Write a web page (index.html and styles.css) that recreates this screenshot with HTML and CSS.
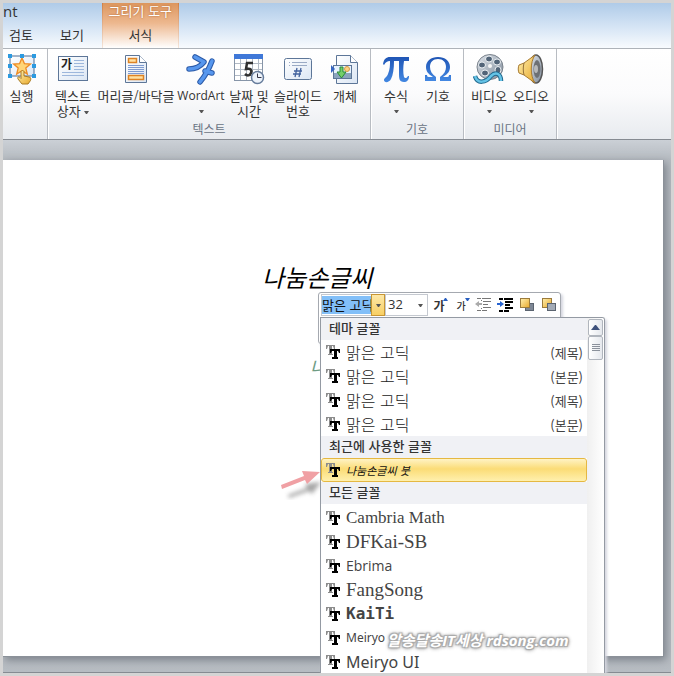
FILE: index.html
```html
<!DOCTYPE html>
<html lang="ko">
<head>
<meta charset="utf-8">
<title>그리기 도구</title>
<link rel="stylesheet" href="styles.css">
</head>
<body>
<svg class="defs" aria-hidden="true">
  <defs>
    <linearGradient id="blue" x1="0" y1="0" x2="0" y2="1"><stop offset="0" stop-color="#1f55b5"/><stop offset="1" stop-color="#4388e2"/></linearGradient>
    <linearGradient id="gold" x1="0" y1="0" x2="1" y2="1"><stop offset="0" stop-color="#fff0b0"/><stop offset="1" stop-color="#e8a92c"/></linearGradient>
    <linearGradient id="steel" x1="0" y1="0" x2="1" y2="1"><stop offset="0" stop-color="#dde3ea"/><stop offset="1" stop-color="#7f8b99"/></linearGradient>
    <linearGradient id="sheet" x1="0" y1="0" x2="1" y2="1"><stop offset="0" stop-color="#ffffff"/><stop offset="1" stop-color="#dbe6f4"/></linearGradient>
    <symbol id="tt" viewBox="0 0 14 14">
      <path d="M0 0h9v4H8L7 1H6v8h1v1H2V9h1V1H2L1 4H0z" fill="#8c8c8c"/>
      <path d="M4 4h10v4h-1l-1-2h-1v6h1v2H6v-2h2V6H6L5 8H4z" fill="#000"/>
    </symbol>
    <symbol id="down" viewBox="0 0 5 3"><path d="M0 0h5L3 3H2z" fill="currentColor"/></symbol>
  </defs>
</svg>
<div class="window">
  <header class="tabs">
    <span class="app-title">nt</span>
    <nav class="tab-row">
      <a class="tab" href="#review">검토</a>
      <a class="tab" href="#view">보기</a>
      <div class="context">
        <span class="context-name">그리기 도구</span>
        <a class="tab" href="#format">서식</a>
      </div>
    </nav>
  </header>

  <section class="ribbon">
    <div class="group group-action">
      <div class="tools">
        <button class="tool">
          <svg width="32" height="32" viewBox="0 0 32 32"><rect x="4" y="3" width="24" height="20" fill="url(#sheet)" stroke="#496b94"/><path d="M16 5l2.400 5.600 6 .5-4.600 3.900 1.500 6-5.300-3.300-5.300 3.300 1.500-6L7.600 11.100l6-.5z" fill="#ffd577" stroke="#ee8b25" stroke-width="1.300"/><g fill="#2c9ae0"><path d="M2 1h4v4H2zM14 1h4v4h-4zM26 1h4v4h-4zM2 11h4v4H2zM26 11h4v4h-4zM2 21h4v4H2zM26 21h4v4h-4z"/></g><path d="M15 19c0-2 3-2 3 0v4l5 1c2 0 2 2 1.500 3.500L22 31h-6l-4-5c-1-2 1-3 2-1.500l1 1z" fill="url(#gold)" stroke="#a87b25"/></svg>
          <span>실행</span>
        </button>
      </div>
    </div>
    <div class="group group-text">
      <div class="tools">
        <button class="tool w-box">
          <svg width="32" height="32" viewBox="0 0 32 32"><rect x="1.500" y="3.500" width="29" height="24" fill="url(#sheet)" stroke="#5d7698"/><path d="M17 7.500h10M17 10.500h10M17 13.500h10M17 16.500h10M5 19.500h22M5 22.500h22" stroke="#9db7dc"/><text class="glyph-small" x="4" y="16">가</text></svg>
          <span>텍스트<br>상자 <svg class="arrow" width="5" height="3"><use href="#down"/></svg></span>
        </button>
        <button class="tool w-header">
          <svg width="32" height="32" viewBox="0 0 32 32"><path d="M5.500 2.500h14l7 7v20h-21z" fill="url(#sheet)" stroke="#5d7698"/><path d="M19.500 2.500v7h7" fill="#fff" stroke="#5d7698"/><rect x="8.500" y="5.500" width="8" height="4" fill="#ffe0a0" stroke="#dd8325" stroke-width="1.500"/><rect x="8.500" y="22.500" width="15" height="4" fill="#ffe0a0" stroke="#dd8325" stroke-width="1.500"/><path d="M8 12.500h16M8 14.500h16M8 16.500h16M8 18.500h16M8 20.500h16" stroke="#7f9bd0"/></svg>
          <span>머리글/바닥글</span>
        </button>
        <button class="tool w-art">
          <svg width="32" height="32" viewBox="0 0 32 32"><g fill="none" stroke-linecap="round" stroke-linejoin="round"><path d="M10 4l9 5c-4 5-9 7-15 7M27 8c-3 8-7 15-12 21M20 18l7 2" stroke="#2d5ba8" stroke-width="5.500"/><path d="M10 4l9 5c-4 5-9 7-15 7M27 8c-3 8-7 15-12 21M20 18l7 2" stroke="#5797ee" stroke-width="3.500"/></g></svg>
          <span>WordArt</span>
          <svg class="arrow arrow-below" width="5" height="3"><use href="#down"/></svg>
        </button>
        <button class="tool w-date">
          <svg width="32" height="32" viewBox="0 0 32 32"><rect x="1.500" y="2.500" width="28" height="25" fill="#fff" stroke="#8795a8"/><path d="M1 1h29v5H1z" fill="#3f78d8"/><path d="M2 10.500h27M2 16.500h27M2 22.500h27M7.500 6v21M13.500 6v21M19.500 6v21M25.500 6v21" stroke="#b2bac5"/><path d="M20 10h-6l-1 6c5-1 6 1 5 4s-4 3-6 1" fill="none" stroke="#303030" stroke-width="2.500"/><circle cx="24.500" cy="24.500" r="6" fill="#edf3fb" stroke="#657b9a" stroke-width="1.500"/><path d="M24.500 20.500v4h4" fill="none" stroke="#334"/></svg>
          <span>날짜 및<br>시간</span>
        </button>
        <button class="tool w-number">
          <svg width="32" height="32" viewBox="0 0 32 32"><rect x="2.500" y="5.500" width="27" height="21" rx="2" fill="url(#sheet)" stroke="#5d7698"/><path d="M7 9.500h1M10 9.500h15M7 12.500h1M10 12.500h15" stroke="#9aaac5"/><path d="M15 15l-2 9M19 15l-2 9M12 18h8M11 21h8" stroke="#42629e" stroke-width="1.300"/></svg>
          <span>슬라이드<br>번호</span>
        </button>
        <button class="tool w-object">
          <svg width="32" height="32" viewBox="0 0 32 32"><path d="M7.500 2.500h14l7 7v21h-21z" fill="url(#sheet)" stroke="#5d7698"/><path d="M21.500 2.500v7h7" fill="#fff" stroke="#5d7698"/><rect x="4.500" y="12.500" width="18" height="13" fill="#e8f3ff" stroke="#5d7698"/><path d="M5 20h17v5H5z" fill="#8ba4bd"/><circle cx="18" cy="16" r="2.500" fill="#ffd181" stroke="#d49b47"/><path d="M11 14h3v5h3l-4.500 6L8 19h3z" fill="#74cf68" stroke="#28883b"/><path d="M2 12l4 4-4 4z" fill="#3766c2"/></svg>
          <span>개체</span>
        </button>
      </div>
      <h2>텍스트</h2>
    </div>
    <div class="group group-symbol">
      <div class="tools">
        <button class="tool w-media">
          <svg width="32" height="32" viewBox="0 0 32 32"><path d="M3 11C4 6 6 4 10 4h19v4h-5c-1 6-1 12 0 16 1 2 3 1 4-1h1c0 4-2 6-5 6-5 0-5-4-5-9V8h-5c0 8-1 14-3 18-2 4-7 4-7 1 0-2 3-3 4-6 2-5 2-9 2-13-3 0-4 1-6 4z" fill="url(#blue)"/></svg>
          <span>수식</span>
          <svg class="arrow arrow-below" width="5" height="3"><use href="#down"/></svg>
        </button>
        <button class="tool w-media">
          <svg width="32" height="32" viewBox="0 0 32 32"><path d="M3 28v-6h2c0 2 1 2 3 2h3C6 21 4 18 4 14 4 8 9 4 16 4s12 4 12 10c0 4-2 7-7 10h3c2 0 3 0 3-2h2v6H18v-4c4-3 6-6 6-10 0-5-3-8-8-8s-8 3-8 8c0 4 2 7 6 10v4z" fill="url(#blue)"/></svg>
          <span>기호</span>
        </button>
      </div>
      <h2>기호</h2>
    </div>
    <div class="group group-media">
      <div class="tools">
        <button class="tool w-media">
          <svg width="32" height="32" viewBox="0 0 32 32"><ellipse cx="17" cy="14" rx="13" ry="12.500" fill="url(#steel)" stroke="#7b838d"/><g fill="#526478" stroke="#eef2f5"><ellipse cx="16" cy="6" rx="3.500" ry="3"/><ellipse cx="24" cy="9" rx="3.500" ry="3"/><ellipse cx="25" cy="17" rx="3" ry="3.500"/><ellipse cx="9" cy="12" rx="3.500" ry="3"/><ellipse cx="12" cy="20" rx="3.500" ry="3"/></g><circle cx="17" cy="13" r="2" fill="#f7f7f7"/><path d="M2 23c2 8 11 7 16 0 5-5 10-2 10 5" fill="none" stroke="#21698f" stroke-width="4.500"/><path d="M2 23c2 8 11 7 16 0 5-5 10-2 10 5" fill="none" stroke="#65c3e6" stroke-width="2.500"/></svg>
          <span>비디오</span>
          <svg class="arrow arrow-below" width="5" height="3"><use href="#down"/></svg>
        </button>
        <button class="tool w-media">
          <svg width="32" height="32" viewBox="0 0 32 32"><ellipse cx="21" cy="16" rx="6.500" ry="14" fill="url(#steel)" stroke="#555" stroke-width="1.500"/><ellipse cx="22" cy="16" rx="3.500" ry="9" fill="#6d7074"/><path d="M4 12l5-2L20 2c-5 7-5 21 0 28L9 22l-5-2c-1-2-1-6 0-8z" fill="url(#gold)" stroke="#a87b32"/><path d="M9 10c-1 4-1 8 0 12" fill="none" stroke="#93703a"/><ellipse cx="21" cy="16" rx="2" ry="4" fill="#b8b9ba"/></svg>
          <span>오디오</span>
          <svg class="arrow arrow-below" width="5" height="3"><use href="#down"/></svg>
        </button>
      </div>
      <h2>미디어</h2>
    </div>
  </section>

  <main class="workspace">
    <article class="slide">
      <h1>나눔손글씨</h1>
      <p class="subtitle">나</p>
      <svg class="pointer" width="44" height="34" viewBox="0 0 44 34"><path d="M7 29l19-7-2-4 16-2-9 12-3-3-20 7z" fill="#777" opacity=".65" filter="blur(2px)"/><path d="M0 19l23-9-2-5 18 1-13 12-2-4-23 9z" fill="#f0a0a4"/></svg>
    </article>
    <div class="mini">
      <div class="mini-row">
        <div class="combo combo-font"><input aria-label="글꼴" value="맑은 고딕"><button class="drop hot" aria-label="글꼴 목록"><svg width="5" height="3"><use href="#down"/></svg></button></div>
        <div class="combo combo-size"><input aria-label="글꼴 크기" value="32"><button class="drop" aria-label="크기 목록"><svg width="5" height="3"><use href="#down"/></svg></button></div>
        <button class="mini-tool big" aria-label="글꼴 크기 크게">가<svg class="mark" width="5" height="3" viewBox="0 0 5 3"><path d="M0 3h5L3 0H2z" fill="#285ec0"/></svg></button>
        <button class="mini-tool small" aria-label="글꼴 크기 작게">가<svg class="mark" width="5" height="3" viewBox="0 0 5 3"><path d="M0 0h5L3 3H2z" fill="#285ec0"/></svg></button>
        <button class="mini-tool" aria-label="목록 수준 줄임"><svg width="16" height="16" viewBox="0 0 16 16"><path d="M2 1.500h4M7 1.500h9M8 4.500h8M8 7.500h5M8 10.500h8M2 13.500h4M7 13.500h5M6 3.500h1M6 11.500h1" stroke="#777"/><path d="M0 7l4-3v2h3v2H4v2z" fill="#aaa"/></svg></button>
        <button class="mini-tool" aria-label="목록 수준 늘림"><svg width="16" height="16" viewBox="0 0 16 16"><path d="M2 2h4M7 2h9M8 5h8M8 8h5M8 11h8M2 14h4M7 14h5" stroke="#000" stroke-width="2"/><path d="M7 7L3 4v2H0v2h3v2z" fill="#2764d2"/></svg></button>
        <button class="mini-tool" aria-label="앞으로 가져오기"><svg width="16" height="16" viewBox="0 0 16 16"><rect x="6.500" y="6.500" width="8" height="7" fill="#7e8795" stroke="#5b6470"/><rect x="1.500" y="1.500" width="9" height="9" fill="url(#gold)" stroke="#9b7b3c"/></svg></button>
        <button class="mini-tool" aria-label="뒤로 보내기"><svg width="16" height="16" viewBox="0 0 16 16"><rect x="1.500" y="1.500" width="9" height="9" fill="url(#gold)" stroke="#9b7b3c"/><rect x="6.500" y="6.500" width="8" height="7" fill="#a3abb7" stroke="#5b6470"/></svg></button>
      </div>
    </div>
    <div class="menu">
      <div class="menu-list">
        <h3>테마 글꼴</h3>
        <button class="font-item"><svg width="14" height="14"><use href="#tt"/></svg><span class="malgun">맑은 고딕</span><small>(제목)</small></button>
        <button class="font-item"><svg width="14" height="14"><use href="#tt"/></svg><span class="malgun">맑은 고딕</span><small>(본문)</small></button>
        <button class="font-item"><svg width="14" height="14"><use href="#tt"/></svg><span class="malgun">맑은 고딕</span><small>(제목)</small></button>
        <button class="font-item"><svg width="14" height="14"><use href="#tt"/></svg><span class="malgun">맑은 고딕</span><small>(본문)</small></button>
        <h3>최근에 사용한 글꼴</h3>
        <button class="font-item current"><svg width="14" height="14"><use href="#tt"/></svg><span class="brush">나눔손글씨 붓</span></button>
        <h3>모든 글꼴</h3>
        <button class="font-item"><svg width="14" height="14"><use href="#tt"/></svg><span class="cambria">Cambria Math</span></button>
        <button class="font-item"><svg width="14" height="14"><use href="#tt"/></svg><span class="song">DFKai-SB</span></button>
        <button class="font-item"><svg width="14" height="14"><use href="#tt"/></svg><span class="ebrima">Ebrima</span></button>
        <button class="font-item"><svg width="14" height="14"><use href="#tt"/></svg><span class="song">FangSong</span></button>
        <button class="font-item"><svg width="14" height="14"><use href="#tt"/></svg><span class="kaiti">KaiTi</span></button>
        <button class="font-item"><svg width="14" height="14"><use href="#tt"/></svg><span class="meiryo">Meiryo</span></button>
        <button class="font-item"><svg width="14" height="14"><use href="#tt"/></svg><span class="meiryo-ui">Meiryo UI</span></button>
      </div>
      <div class="scrollbar">
        <button class="scroll-up" aria-label="위로"><svg width="9" height="5" viewBox="0 0 9 5"><path d="M0 5h9L5 0H4z" fill="#3f527c"/></svg></button>
        <div class="thumb"><svg width="8" height="8" viewBox="0 0 8 8"><path d="M0 .5h8M0 2.500h8M0 4.500h8M0 6.500h8" stroke="#8b919b"/></svg></div>
      </div>
    </div>
    <p class="watermark">알송달송IT세상 rdsong.com</p>
  </main>
</div>
</body>
</html>
```
FILE: styles.css
```css
* { box-sizing: border-box; }
body {
  margin: 0;
  background: #d4d4d4;
  color: #333;
  font: 13px/15px "Noto Sans CJK KR", sans-serif;
}
button, input { font: inherit; color: inherit; border: 0; padding: 0; margin: 0; background: none; }
a { color: inherit; text-decoration: none; }
h1, h2, h3, p { margin: 0; font-weight: 400; }
svg { display: block; flex: none; }
.defs { position: absolute; width: 0; height: 0; }
.window { height: 100vh; border: 3px solid #d4d4d4; overflow: hidden; display: flex; flex-direction: column; }

.tabs { position: relative; height: 45px; flex: none; background: linear-gradient(#afcbe8, #d3e3f4 50%, #f8fbfe); }
.app-title { position: absolute; left: 0; top: 0; font: 15px/16px "Open Sans", sans-serif; }
.tab-row { display: flex; height: 100%; align-items: flex-end; }
.tab { display: block; padding: 0 6px; height: 21px; line-height: 15px; }
.tab + .tab { margin-left: 15px; }
.context {
  width: 77px; height: 100%; margin-left: 12px; text-align: center;
  display: flex; flex-direction: column; justify-content: space-between;
  border: solid #dba076; border-width: 0 1px;
  border-image: linear-gradient(#cf7e42, #f6e8de) 1;
  background: linear-gradient(#dc965e, #edb88f 45%, #fff);
}
.context-name { color: #fff; line-height: 15px; white-space: nowrap; text-shadow: 0 0 2px #a55b28; }

.ribbon {
  display: flex; height: 92px; flex: none;
  border-top: 1px solid #aeb3b9; border-bottom: 1px solid #868b92;
  background: linear-gradient(#fff, #fbfbfc 50%, #e8ebef);
}
.group { display: flex; flex-direction: column; justify-content: space-between; border-right: 1px solid #b8bcc2; box-shadow: 1px 0 #fff; }
.group-action { width: 45px; }
.group-text { width: 323px; }
.group-symbol, .group-media { width: 93px; }
.group h2 { font-size: 12px; line-height: 15px; padding-bottom: 3px; text-align: center; color: #697383; }
.tools { display: flex; justify-content: center; padding-top: 4px; }
.group-action .tools { padding-right: 7px; }
.tool { display: flex; flex-direction: column; align-items: center; line-height: 15px; white-space: nowrap; }
.tool > span { margin-top: 3px; }
.w-box { width: 44px; }
.w-header { width: 82px; }
.w-art { width: 48px; }
.w-date { width: 48px; }
.w-number { width: 50px; }
.w-object { width: 44px; }
.w-media { width: 42px; }
.w-art span { font-family: "Open Sans", sans-serif; font-size: 12px; }
.arrow { color: #555; }
.tool span .arrow { display: inline-block; vertical-align: middle; }
.arrow-below { margin-top: 7px; }
.glyph-small { font-size: 12px; font-weight: 700; fill: #222; }

.workspace {
  position: relative; flex: 1; min-height: 0; padding: 20px 7px 15px 0;
  background: linear-gradient(#cbd0d6, #b5bac0 20px, #a5abb2 60%, #b7bcc2);
  border-bottom: 1px solid #868b92;
}
.slide { position: relative; height: 100%; background: #fff; border: solid #8b9199; border-width: 0 1px 1px 0; box-shadow: 2px 3px 8px #7c828a; }
h1 { position: absolute; left: 259px; top: 100px; font-size: 24px; line-height: 34px; font-style: italic; color: #000; white-space: nowrap; }
.subtitle { position: absolute; left: 307px; top: 196px; font-size: 18px; line-height: 20px; font-style: italic; color: #6e9c84; }
.pointer { position: absolute; left: 278px; top: 306px; }
.watermark {
  position: absolute; left: 382px; top: 490px; padding: 0 2px;
  font: italic 700 15px/20px "Open Sans", "Noto Sans CJK KR", sans-serif; color: #fff; white-space: nowrap;
  text-shadow: 1px 1px 1px #aaa, -1px -1px 1px #aaa, 1px -1px 1px #aaa, -1px 1px 1px #aaa, 0 0 3px #aaa, 0 1px 4px #aaa, 0 0 4px #aaa;
}

.mini { position: absolute; left: 315px; top: 152px; width: 243px; height: 52px; border: 1px solid #a5a9b0; border-radius: 3px; background: #fff; box-shadow: 2px 2px 3px #d4d6df; }
.mini-row { display: flex; align-items: center; height: 24px; padding-left: 2px; }
.combo { display: flex; align-items: center; height: 22px; border: 1px solid #c5c9d0; background: #fff; }
.combo input { flex: 1; min-width: 0; height: 18px; padding-bottom: 2px; }
.combo-font { width: 64px; border-right: 0; }
.combo-font input { background: #82bff8; color: #111; }
.combo-size { width: 43px; }
.combo-size input { font-family: "Open Sans", sans-serif; padding-left: 2px; }
.drop { width: 14px; height: 22px; display: flex; align-items: center; justify-content: center; color: #555; }
.hot { border: 1px solid #c89634; background: linear-gradient(#fde8a8, #f8cf63); }
.mini-tool { position: relative; width: 22px; height: 20px; display: flex; align-items: center; justify-content: center; }
.big { font-weight: 700; font-size: 12px; }
.small { font-weight: 500; font-size: 10px; }
.mark { position: absolute; right: 2px; top: 3px; }

.menu { position: absolute; left: 317px; top: 177px; bottom: -2px; width: 285px; display: flex; overflow: hidden; background: #fff; border: 1px solid #949aa3; border-bottom: 0; border-radius: 0 3px 0 0; box-shadow: 2px 2px 3px #d4d6df; }
.menu-list { flex: 1; }
h3 { height: 22px; padding-left: 8px; font-size: 13px; line-height: 20px; font-weight: 500; background: #f0f1f5; }
.font-item { display: flex; align-items: center; gap: 6px; width: 100%; height: 24px; padding: 0 4px 0 5px; text-align: left; white-space: nowrap; color: #444; }
.font-item small { margin-left: auto; font-size: 13px; }
.current { border: 1px solid #e5b842; border-radius: 3px; background: linear-gradient(#fff3c4, #fbdc76 45%, #fff0ae); padding-left: 4px; }
.current + h3 { margin-bottom: 2px; }
.malgun { font-size: 16px; font-weight: 300; color: #222; }
.brush { font-size: 11px; font-style: italic; color: #111; }
.cambria { font: 17px/24px "Liberation Serif", serif; }
.song { font: 19px/24px "Liberation Serif", serif; }
.ebrima { font: 14px/24px "Open Sans", sans-serif; }
.kaiti { font: 700 16px/24px "DejaVu Sans Mono", monospace; }
.meiryo { font: 12px/24px "Noto Sans", sans-serif; }
.meiryo-ui { font: 16px/24px "Noto Sans", sans-serif; }
.scrollbar { width: 17px; padding: 1px; background: linear-gradient(90deg, #f0f0f0, #fff); }
.scroll-up, .thumb { display: flex; align-items: center; justify-content: center; width: 15px; border: 1px solid #b0b5bd; border-radius: 2px; background: linear-gradient(90deg, #fff, #e5e8ed); }
.scroll-up { height: 17px; }
.thumb { height: 24px; }
```
